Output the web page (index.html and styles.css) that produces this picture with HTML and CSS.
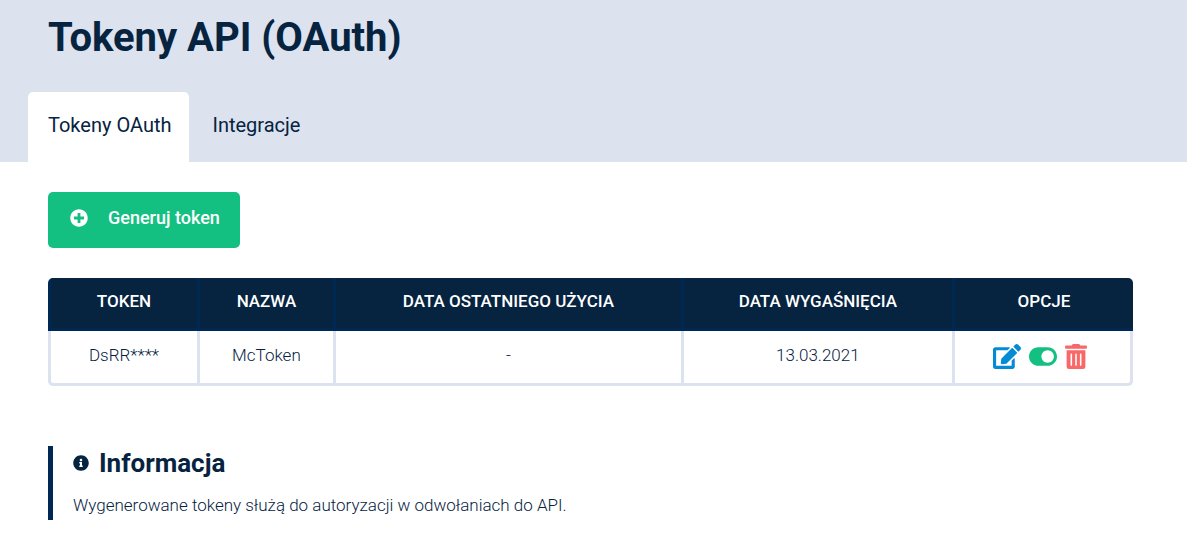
FILE: index.html
```html
<!DOCTYPE html>
<html lang="pl">
<head>
<meta charset="utf-8">
<meta name="viewport" content="width=device-width, initial-scale=1">
<title>Tokeny API (OAuth)</title>
<link rel="stylesheet" href="styles.css">
</head>
<body>
<header class="page-header">
  <h1 class="page-title">Tokeny API (OAuth)</h1>
  <nav class="tabs">
    <a class="tab tab-active" href="#tokens" aria-current="page">Tokeny OAuth</a>
    <a class="tab" href="#integrations">Integracje</a>
  </nav>
</header>
<main class="content">
  <button class="generate" type="button">
    <svg class="generate-icon" viewBox="0 0 512 512" aria-hidden="true"><path d="M256 8C119 8 8 119 8 256s111 248 248 248 248-111 248-248S393 8 256 8zm144 276c0 6.600-5.400 12-12 12h-92v92c0 6.600-5.400 12-12 12h-56c-6.600 0-12-5.400-12-12v-92h-92c-6.600 0-12-5.400-12-12v-56c0-6.600 5.400-12 12-12h92v-92c0-6.600 5.400-12 12-12h56c6.600 0 12 5.400 12 12v92h92c6.600 0 12 5.400 12 12v56z"/></svg>
    <span>Generuj token</span>
  </button>
  <table class="tokens">
    <colgroup>
      <col class="col-token"><col class="col-name"><col class="col-used"><col class="col-expires"><col class="col-options">
    </colgroup>
    <thead>
      <tr><th scope="col">TOKEN</th><th scope="col">NAZWA</th><th scope="col">DATA OSTATNIEGO UŻYCIA</th><th scope="col">DATA WYGAŚNIĘCIA</th><th scope="col">OPCJE</th></tr>
    </thead>
    <tbody>
      <tr>
        <td>DsRR****</td><td>McToken</td><td>-</td><td>13.03.2021</td>
        <td>
          <div class="options">
            <button class="option option-edit" type="button" aria-label="Edytuj"><svg viewBox="0 0 576 512" width="28" height="25" aria-hidden="true"><path d="M402.600 83.200l90.200 90.200c3.800 3.800 3.800 10 0 13.800L274.400 405.600l-92.800 10.300c-12.400 1.400-22.900-9.100-21.500-21.500l10.300-92.800L388.800 83.200c3.800-3.800 10-3.800 13.800 0zm162-22.900l-48.800-48.800c-15.200-15.200-39.900-15.200-55.200 0l-35.400 35.400c-3.800 3.800-3.800 10 0 13.800l90.200 90.200c3.800 3.800 10 3.800 13.800 0l35.400-35.400c15.200-15.300 15.200-40 0-55.200zM384 346.200V448H64V128h229.800c3.200 0 6.200-1.300 8.500-3.500l40-40c7.600-7.600 2.200-20.500-8.500-20.500H48C21.500 64 0 85.500 0 112v352c0 26.500 21.500 48 48 48h352c26.500 0 48-21.500 48-48V306.200c0-10.700-12.900-16-20.500-8.500l-40 40c-2.200 2.300-3.500 5.300-3.500 8.500z"/></svg></button>
            <button class="option option-toggle" type="button" role="switch" aria-checked="true" aria-label="Aktywny"><svg viewBox="0 0 576 512" width="28" height="25" aria-hidden="true"><path d="M384 64H192C86 64 0 150 0 256s86 192 192 192h192c106 0 192-86 192-192S490 64 384 64zm0 320c-70.800 0-128-57.300-128-128 0-70.800 57.300-128 128-128 70.800 0 128 57.300 128 128 0 70.800-57.300 128-128 128z"/></svg></button>
            <button class="option option-delete" type="button" aria-label="Usuń"><svg viewBox="0 0 448 512" width="22" height="25" aria-hidden="true"><path d="M32 464a48 48 0 0 0 48 48h288a48 48 0 0 0 48-48V128H32zm272-256a16 16 0 0 1 32 0v224a16 16 0 0 1-32 0zm-96 0a16 16 0 0 1 32 0v224a16 16 0 0 1-32 0zm-96 0a16 16 0 0 1 32 0v224a16 16 0 0 1-32 0zM432 32H312l-9.400-18.700A24 24 0 0 0 281.100 0H166.800a23.720 23.720 0 0 0-21.400 13.300L136 32H16A16 16 0 0 0 0 48v32a16 16 0 0 0 16 16h416a16 16 0 0 0 16-16V48a16 16 0 0 0-16-16z"/></svg></button>
          </div>
        </td>
      </tr>
    </tbody>
  </table>
  <section class="info">
    <h2 class="info-title">
      <svg class="info-icon" viewBox="0 0 512 512" aria-hidden="true"><path d="M256 8C119 8 8 119 8 256s111 248 248 248 248-111 248-248S393 8 256 8zm0 110c23.200 0 42 18.800 42 42s-18.800 42-42 42-42-18.800-42-42 18.800-42 42-42zm56 254c0 6.600-5.400 12-12 12h-88c-6.600 0-12-5.400-12-12v-24c0-6.600 5.400-12 12-12h12v-64h-12c-6.600 0-12-5.400-12-12v-24c0-6.600 5.400-12 12-12h64c6.600 0 12 5.400 12 12v100h12c6.600 0 12 5.400 12 12v24z"/></svg>
      <span>Informacja</span>
    </h2>
    <p class="info-text">Wygenerowane tokeny służą do autoryzacji w odwołaniach do API.</p>
  </section>
</main>
</body>
</html>
```

FILE: styles.css
```css
* {
  box-sizing: border-box;
}

body {
  margin: 0;
  background: #fff;
  color: #06233f;
  font-family: Roboto, "Liberation Sans", sans-serif;
}

.page-header {
  padding: 12px 28px 0;
  background: #dce2ee;
}

.page-title {
  margin: 0;
  padding: 0 20px;
  font-size: 40px;
  line-height: 52px;
  font-weight: 700;
}

.tabs {
  display: flex;
  gap: 3px;
  margin-top: 28px;
}

.tab {
  padding: 21px 18px 25px 20px;
  border-radius: 5px 5px 0 0;
  color: inherit;
  font-size: 20px;
  line-height: 24px;
  text-decoration: none;
}

.tab-active {
  background: #fff;
}

.content {
  padding: 30px 54px 32px 48px;
}

.generate {
  display: flex;
  align-items: center;
  gap: 20px;
  padding: 14px 20px 18px 22px;
  border: 0;
  border-radius: 5px;
  background: #14c081;
  color: #fff;
  font: 500 18px/24px Roboto, "Liberation Sans", sans-serif;
}

.generate-icon {
  width: 18px;
  height: 18px;
  fill: currentColor;
}

.tokens {
  width: 100%;
  margin-top: 30px;
  table-layout: fixed;
  border-collapse: separate;
  border-spacing: 0;
  font-size: 17px;
  line-height: 24px;
  text-align: center;
}

.col-token { width: 13.73%; }
.col-name { width: 12.53%; }
.col-used { width: 32.07%; }
.col-expires { width: 24.98%; }
.col-options { width: 16.69%; }

.tokens th {
  padding: 11px 0 15px;
  border: solid #002855;
  border-width: 0 0 3px 3px;
  background: #06233f;
  color: #fff;
  font-weight: 500;
}

.tokens td {
  height: 55px;
  padding: 12px 0 13px;
  border: solid #dce2ee;
  border-width: 0 0 3px 3px;
  font-weight: 300;
  vertical-align: top;
}

.tokens th:first-child { border-top-left-radius: 5px; }
.tokens th:last-child { border-top-right-radius: 5px; }
.tokens td:first-child { border-bottom-left-radius: 5px; }
.tokens td:last-child {
  border-right-width: 3px;
  border-bottom-right-radius: 5px;
}

.options {
  display: flex;
  justify-content: center;
  gap: 8px;
  padding: 1px 4px 0 0;
}

.option {
  padding: 0;
  border: 0;
  background: none;
}

.option svg {
  display: block;
  fill: currentColor;
}

.option-edit { color: #048bd6; }
.option-toggle { color: #14c081; }
.option-delete { color: #f96868; }

.info {
  margin-top: 60px;
  padding-left: 20px;
  border-left: 5px solid #002855;
}

.info-title {
  display: flex;
  align-items: center;
  gap: 10px;
  margin: 0;
  font-size: 26px;
  line-height: 34px;
  font-weight: 700;
}

.info-icon {
  width: 16px;
  height: 16px;
  fill: currentColor;
}

.info-text {
  margin: 0;
  padding: 11px 0 1px;
  font-size: 17px;
  line-height: 28px;
  font-weight: 300;
}
```
